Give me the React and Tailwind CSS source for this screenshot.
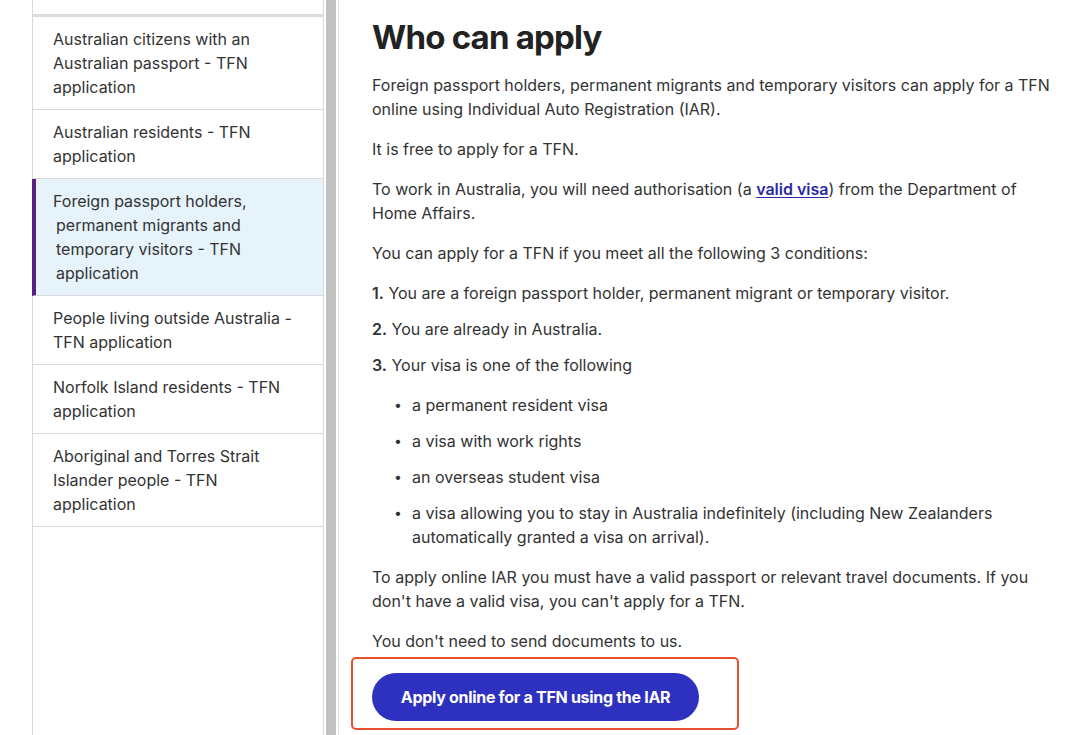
import React from "react";

const navItems = [
  { label: "Australian citizens with an Australian passport - TFN application" },
  { label: "Australian residents - TFN application" },
  {
    label: "Foreign passport holders, permanent migrants and temporary visitors - TFN application",
    active: true,
  },
  { label: "People living outside Australia - TFN application" },
  { label: "Norfolk Island residents - TFN application" },
  { label: "Aboriginal and Torres Strait Islander people - TFN application" },
];

const visas = [
  "a permanent resident visa",
  "a visa with work rights",
  "an overseas student visa",
  "a visa allowing you to stay in Australia indefinitely (including New Zealanders automatically granted a visa on arrival).",
];

function SideNav() {
  return (
    <nav className="ml-[32px] w-[292px] border-x border-[#d9d9d9] bg-white flex flex-col">
      <div className="h-[17px] border-b-[3px] border-[#dcdcdc]" />
      <ul>
        {navItems.map((item) =>
          item.active ? (
            <li
              key={item.label}
              className="border-b border-[#d9d9d9] border-l-4 border-l-[#5b1f82] -ml-px bg-[#e6f3fb] pl-[20px] pr-[40px] pt-[10px] pb-[10px] text-[16px] leading-[24px] text-[#333] [text-indent:-3px]"
            >
              {item.label}
            </li>
          ) : (
            <li
              key={item.label}
              className="border-b border-[#d9d9d9] pl-[20px] pr-[26px] pt-[10px] pb-[10px] text-[16px] leading-[24px] text-[#333]"
            >
              {item.label}
            </li>
          )
        )}
      </ul>
    </nav>
  );
}

export default function App() {
  return (
    <div
      className="h-[735px] w-[1080px] overflow-hidden bg-white flex"
      style={{ fontFamily: "Inter, 'Noto Sans', sans-serif" }}
    >
      <SideNav />
      <div className="ml-[2px] w-[10px] bg-[#c2c2c2]" />
      <div className="ml-[2px] w-px bg-[#e3e3e3]" />
      <main className="pl-[33px] pr-[20px] pt-[15px] flex-1 text-[#333] text-[16px] leading-[24px]">
        <h1 className="text-[33px] leading-[44px] font-bold text-[#222] tracking-[-0.8px] mb-[14px]">
          Who can apply
        </h1>
        <p className="mb-[16px]">
          Foreign passport holders, permanent migrants and temporary visitors can apply for a TFN
          online using Individual Auto Registration (IAR).
        </p>
        <p className="mb-[16px]">It is free to apply for a TFN.</p>
        <p className="mb-[16px]">
          To work in Australia, you will need authorisation (a{" "}
          <a href="#" className="text-[#2a2aa8] font-semibold underline underline-offset-2">
            valid visa
          </a>
          ) from the Department of Home Affairs.
        </p>
        <p className="mb-[16px]">You can apply for a TFN if you meet all the following 3 conditions:</p>
        <ol className="flex flex-col gap-[12px]">
          <li>
            <span className="font-semibold">1.</span> You are a foreign passport holder, permanent
            migrant or temporary visitor.
          </li>
          <li>
            <span className="font-semibold">2.</span> You are already in Australia.
          </li>
          <li>
            <span className="font-semibold">3.</span> Your visa is one of the following
            <ul className="mt-[16px] flex flex-col gap-[12px] pl-[22px]">
              {visas.map((v) => (
                <li key={v} className="flex">
                  <span className="w-[18px] shrink-0 text-[14px]">•</span>
                  <span className="pr-[30px]">{v}</span>
                </li>
              ))}
            </ul>
          </li>
        </ol>
        <p className="mt-[16px] mb-[16px]">
          To apply online IAR you must have a valid passport or relevant travel documents. If you
          don't have a valid visa, you can't apply for a TFN.
        </p>
        <p>You don't need to send documents to us.</p>
        <div className="-ml-[21px] mt-[4px] w-[388px] h-[73px] rounded-[5px] border-[2.5px] border-[#e5502d] pl-[19px] pt-[14px]">
          <button className="h-[48px] w-[327px] rounded-full bg-[#2e30c0] text-white font-bold text-[16px] tracking-[-0.3px]">
            Apply online for a TFN using the IAR
          </button>
        </div>
      </main>
    </div>
  );
}
